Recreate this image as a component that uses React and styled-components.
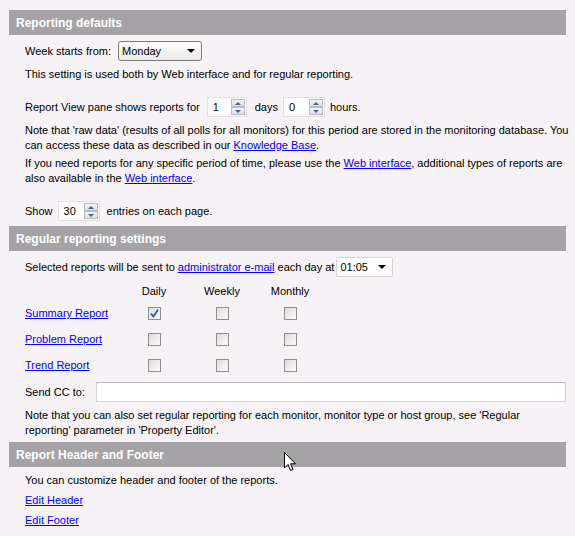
import styled, { createGlobalStyle } from "styled-components";

const GlobalStyle = createGlobalStyle`
    html, body {
        margin: 0;
        background: #f6f2f6;
    }
    body {
        font-family: "Liberation Sans", Arial, sans-serif;
        font-size: 11px;
        color: #000;
    }
`

const Page = styled.div`
    position: relative;
    width: 557px;
    padding: 10px 0 0 9px;
`

const SectionHeader = styled.div`
    height: 25px;
    display: flex;
    align-items: center;
    padding-left: 7px;
    background: #a5a3a6;
    color: #fff;
    font-weight: bold;
    font-size: 12px;
    margin-top: ${props => props.gap || 0}px;
`

const Body = styled.div`
    padding-left: 16px;
    display: flex;
    flex-direction: column;
`

const Row = styled.div`
    display: flex;
    align-items: center;
    height: ${props => props.h || 20}px;
    margin-top: ${props => props.gap || 0}px;
    white-space: nowrap;
`

const Spacer = styled.span`
    width: ${props => props.w}px;
    flex: none;
`

const Text = styled.div`
    line-height: 15px;
    white-space: nowrap;
    margin-top: ${props => props.gap || 0}px;
`

const Link = styled.a`
    color: #0000ff;
    text-decoration: underline;
    cursor: pointer;
`

const Select = styled.div`
    box-sizing: border-box;
    width: ${props => props.w}px;
    height: 20px;
    display: flex;
    align-items: center;
    justify-content: space-between;
    padding: 0 6px 0 3px;
    border: 1px solid ${props => props.flat ? "#d7d5d8" : "#7b7b7b"};
    border-radius: ${props => props.flat ? 1 : 3}px;
    background: ${props => props.flat ? "#fff" : "linear-gradient(#fdfdfd, #ecebec)"};
    margin-left: ${props => props.ml || 0}px;
`

const Caret = styled.span`
    width: 0;
    height: 0;
    border-left: 4px solid transparent;
    border-right: 4px solid transparent;
    border-top: 4px solid #000;
`

const Spinner = styled.div`
    box-sizing: border-box;
    width: ${props => props.w || 40}px;
    height: 20px;
    display: flex;
    align-items: center;
    justify-content: space-between;
    padding: 0 1px 0 5px;
    background: #fff;
    border: 1px solid #e2e0e3;
`

const SpinButtons = styled.div`
    display: flex;
    flex-direction: column;
    width: 14px;
    height: 16px;
`

const SpinButton = styled.div`
    box-sizing: border-box;
    flex: 1;
    display: flex;
    align-items: center;
    justify-content: center;
    border: 1px solid #b9bac4;
    background: linear-gradient(#f4f4f8, #dcdde6);
    &::after {
        content: "";
        border-left: 3px solid transparent;
        border-right: 3px solid transparent;
        ${props => props.down
            ? "border-top: 3px solid #4d6185;"
            : "border-bottom: 3px solid #4d6185;"}
    }
`

const Grid = styled.div`
    display: grid;
    grid-template-columns: 95px 68px 68px 68px;
    grid-template-rows: 16px repeat(3, 26px);
    margin-top: ${props => props.gap || 0}px;
`

const ColHead = styled.div`
    line-height: 14px;
    text-align: center;
`

const Cell = styled.div`
    display: flex;
    align-items: center;
    justify-content: ${props => props.left ? "flex-start" : "center"};
`

const Box = styled.span`
    box-sizing: border-box;
    width: 13px;
    height: 13px;
    border: 1px solid #8e8f8f;
    background: linear-gradient(135deg, #dcdcdc, #fbfbfb);
    display: flex;
    align-items: center;
    justify-content: center;
`

const TextField = styled.div`
    box-sizing: border-box;
    flex: 1;
    height: 20px;
    margin-left: 11px;
    background: #fff;
    border: 1px solid #d7d5d8;
    border-top-color: #bcbabd;
`

const Cursor = styled.svg`
    position: absolute;
    left: 284px;
    top: 452px;
`

const Spin = ({ value, w }) => (
    <Spinner w={w}>
        <span>{value}</span>
        <SpinButtons>
            <SpinButton />
            <SpinButton down />
        </SpinButtons>
    </Spinner>
)

const Check = ({ on }) => (
    <Box>
        {on && (
            <svg width="9" height="9" viewBox="0 0 9 9">
                <path d="M1 4.5 L3.3 7.5 L8 0.8" fill="none" stroke="#3a55a4" strokeWidth="1.8" />
            </svg>
        )}
    </Box>
)

const reports = [
    { name: "Summary Report", daily: true },
    { name: "Problem Report" },
    { name: "Trend Report" },
]

const App = () => {
    return (
        <Page>
            <GlobalStyle />
            <SectionHeader>Reporting defaults</SectionHeader>
            <Body>
                <Row gap={6}>
                    Week starts from:
                    <Select w={84} ml={7}>
                        <span>Monday</span>
                        <Caret />
                    </Select>
                </Row>
                <Text gap={6}>This setting is used both by Web interface and for regular reporting.</Text>
                <Row gap={15}>
                    <span>Report View pane shows reports for</span>
                    <Spacer w={7} />
                    <Spin value="1" />
                    <Spacer w={8} />
                    <span>days</span>
                    <Spacer w={5} />
                    <Spin value="0" w={42} />
                    <Spacer w={5} />
                    <span>hours.</span>
                </Row>
                <Text gap={6}>
                    Note that 'raw data' (results of all polls for all monitors) for this period are stored in the monitoring database. You<br />
                    can access these data as described in our <Link>Knowledge Base</Link>.
                </Text>
                <Text gap={3}>
                    If you need reports for any specific period of time, please use the <Link>Web interface</Link>, additional types of reports are<br />
                    also available in the <Link>Web interface</Link>.
                </Text>
                <Row gap={15}>
                    <span>Show</span>
                    <Spacer w={5} />
                    <Spin value="30" w={42} />
                    <Spacer w={7} />
                    <span>entries on each page.</span>
                </Row>
            </Body>

            <SectionHeader gap={5}>Regular reporting settings</SectionHeader>
            <Body>
                <Row gap={6}>
                    Selected reports will be sent to&nbsp;<Link>administrator e-mail</Link>&nbsp;each day at
                    <Select w={57} ml={2} flat>
                        <span>01:05</span>
                        <Caret />
                    </Select>
                </Row>
                <Grid gap={7}>
                    <ColHead />
                    <ColHead>Daily</ColHead>
                    <ColHead>Weekly</ColHead>
                    <ColHead>Monthly</ColHead>
                    {reports.map(r => [
                        <Cell left key={r.name + "-name"}><Link>{r.name}</Link></Cell>,
                        <Cell key={r.name + "-d"}><Check on={r.daily} /></Cell>,
                        <Cell key={r.name + "-w"}><Check /></Cell>,
                        <Cell key={r.name + "-m"}><Check /></Cell>,
                    ])}
                </Grid>
                <Row gap={4}>
                    <span>Send CC to:</span>
                    <TextField />
                </Row>
                <Text gap={6}>
                    Note that you can also set regular reporting for each monitor, monitor type or host group, see 'Regular<br />
                    reporting' parameter in 'Property Editor'.
                </Text>
            </Body>

            <SectionHeader gap={4}>Report Header and Footer</SectionHeader>
            <Body>
                <Text gap={6}>You can customize header and footer of the reports.</Text>
                <Text gap={5}><Link>Edit Header</Link></Text>
                <Text gap={5}><Link>Edit Footer</Link></Text>
            </Body>

            <Cursor width="13" height="20" viewBox="0 0 13 20">
                <path d="M0.5 0.5 L0.5 16 L4 12.5 L6.5 18.5 L9 17.5 L6.5 11.8 L11.5 11.8 Z" fill="#fff" stroke="#000" strokeWidth="1" />
            </Cursor>
        </Page>
    );
};

export default App;
